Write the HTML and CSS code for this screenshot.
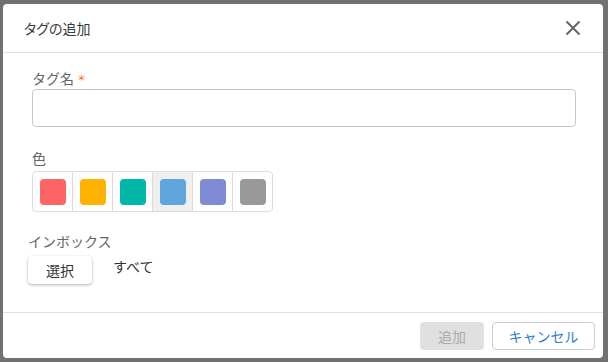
FILE: index.html
```html
<!DOCTYPE html>
<html lang="ja">
<head>
    <meta charset="UTF-8">
    <title>タグの追加</title>
    <link rel="stylesheet" href="styles.css">
</head>
<body>
<div class="dialog">
    <div class="dialog-header">
        <span class="dialog-title">タグの追加</span>
        <button class="close">
            <svg width="16" height="16" viewBox="0 0 16 16"><path d="M1.5 1.5 L14.5 14.5 M14.5 1.5 L1.5 14.5" stroke="#666" stroke-width="2" fill="none"/></svg>
        </button>
    </div>

    <div class="dialog-body">
        <div class="label">タグ名 <span class="req">*</span></div>
        <input class="text-input" type="text">

        <div class="label label-color">色</div>
        <div class="swatches">
            <div class="swatch"><span class="chip red"></span></div>
            <div class="swatch"><span class="chip orange"></span></div>
            <div class="swatch"><span class="chip teal"></span></div>
            <div class="swatch selected"><span class="chip blue"></span></div>
            <div class="swatch"><span class="chip purple"></span></div>
            <div class="swatch"><span class="chip gray"></span></div>
        </div>

        <div class="label label-inbox">インボックス</div>
        <div class="inbox-row">
            <button class="select">選択</button>
            <span class="inbox-value">すべて</span>
        </div>
    </div>

    <div class="dialog-footer">
        <button class="btn btn-add" disabled>追加</button>
        <button class="btn btn-cancel">キャンセル</button>
    </div>
</div>
</body>
</html>
```

FILE: styles.css
```css
*{
    margin: 0;
    padding: 0;
    box-sizing: border-box;
}
body{
    width: 608px;
    height: 362px;
    background-color: #717171;
    padding: 4px 5px 4px 3px;
    font-family: "Noto Sans CJK JP", "Noto Sans", sans-serif;
    font-size: 14px;
    color: #333;
}
.dialog{
    width: 600px;
    height: 354px;
    background-color: #fff;
    border-radius: 4px;
    display: flex;
    flex-direction: column;
}
.dialog-header{
    height: 49px;
    border-bottom: 1px solid #e2e2e2;
    display: flex;
    align-items: center;
    justify-content: space-between;
    padding: 0 22px 0 21px;
}
.dialog-title{
    font-size: 14px;
    color: #3a3a3a;
    font-feature-settings: "palt";
}
.close{
    border: none;
    background: none;
    width: 16px;
    height: 16px;
    display: flex;
}

/*body*/
.dialog-body{
    flex: 1;
    padding: 15px 27px 0 29px;
}
.label{
    height: 20px;
    font-size: 14px;
    line-height: 20px;
    color: #666;
}
.req{
    color: #f07a1c;
    font-family: "DejaVu Sans", sans-serif;
    font-size: 13px;
    line-height: 0;
    margin-left: 1px;
}
.text-input{
    display: block;
    width: 100%;
    height: 38px;
    margin-top: 1px;
    border: 1px solid #c6c6c6;
    border-radius: 4px;
    outline: none;
}
.label-color{
    margin-top: 21px;
}
.swatches{
    display: inline-flex;
    margin-top: 3px;
    border: 1px solid #ddd;
    border-radius: 4px;
    overflow: hidden;
}
.swatch{
    width: 40px;
    height: 39px;
    display: flex;
    align-items: center;
    justify-content: center;
    border-left: 1px solid #ddd;
}
.swatch:first-child{
    border-left: none;
    width: 39px;
}
.swatch.selected{
    background-color: #efefef;
}
.chip{
    width: 26px;
    height: 26px;
    border-radius: 4px;
}
.red{ background-color: #ff6464; }
.orange{ background-color: #ffb300; }
.teal{ background-color: #00b8aa; }
.blue{ background-color: #5fa5dc; }
.purple{ background-color: #7f8cd5; }
.gray{ background-color: #999; }

.label-inbox{
    margin-top: 19px;
    margin-left: -4px;
}
.inbox-row{
    display: flex;
    align-items: flex-start;
    margin-top: 5px;
    margin-left: -4px;
}
.select{
    width: 64px;
    height: 28px;
    border: none;
    border-radius: 4px;
    background-color: #fff;
    box-shadow: 0 1px 3px rgba(0,0,0,0.3);
    font-family: inherit;
    font-size: 14px;
    color: #333;
}
.inbox-value{
    margin-left: 21px;
    line-height: 20px;
    color: #333;
}

/*footer*/
.dialog-footer{
    height: 46px;
    border-top: 1px solid #e2e2e2;
    display: flex;
    justify-content: flex-end;
    padding: 9px 8px 0 0;
}
.btn{
    height: 28px;
    border-radius: 4px;
    font-family: inherit;
    font-size: 14px;
}
.btn-add{
    width: 64px;
    border: none;
    background-color: #e0e0e0;
    color: #aaa;
}
.btn-cancel{
    width: 103px;
    margin-left: 8px;
    border: 1px solid #ccc;
    background-color: #fff;
    color: #2f7fd0;
}
```
